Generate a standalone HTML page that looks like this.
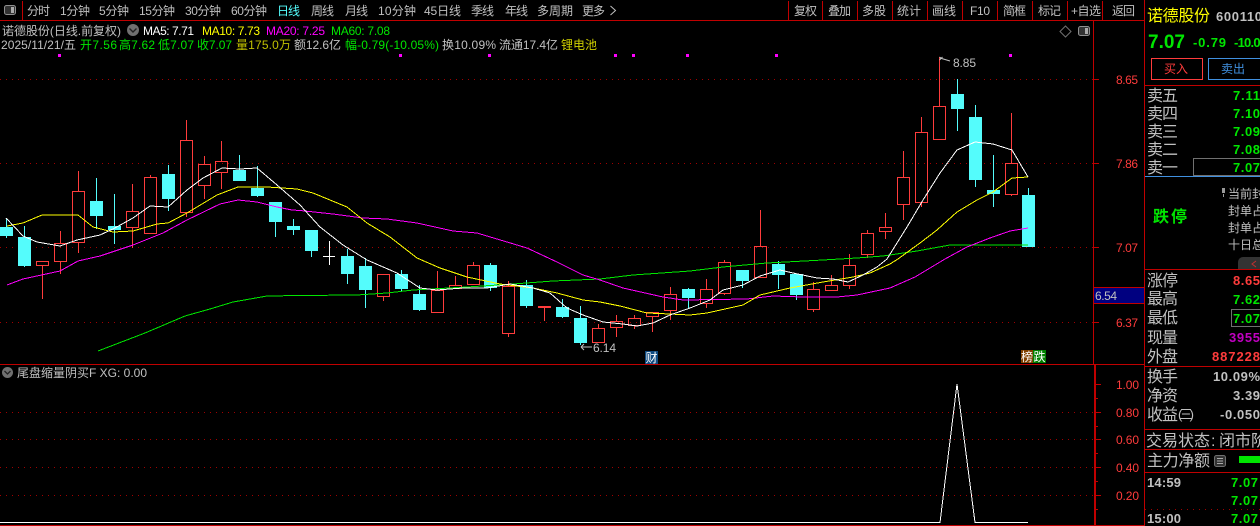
<!DOCTYPE html>
<html><head><meta charset="utf-8"><style>
html,body{margin:0;padding:0;background:#000;width:1260px;height:526px;overflow:hidden}
svg{display:block}
text{font-family:"Liberation Sans","WenQuanYi Zen Hei","Noto Sans CJK SC",sans-serif;font-size:12px;fill:#c0c0c0}
.l{font-size:16px}.g{fill:#00e600}.r{fill:#ff3c3c}.y{fill:#ffff00}.m{fill:#ff00ff}.w{fill:#fff}
.b{font-weight:bold;font-size:13px}
.c{shape-rendering:crispEdges}
</style></head><body>
<svg width="1260" height="526" viewBox="0 0 1260 526" xmlns="http://www.w3.org/2000/svg">
<rect width="1260" height="526" fill="#000"/>
<!-- frame lines -->
<g class="c" fill="#c00000">
<rect x="0" y="20" width="1144" height="1"/>
<rect x="22" y="1" width="1" height="19"/>
<rect x="788" y="1" width="1" height="19"/><rect x="822" y="1" width="1" height="19"/><rect x="857" y="1" width="1" height="19"/><rect x="892" y="1" width="1" height="19"/><rect x="927" y="1" width="1" height="19"/><rect x="962" y="1" width="1" height="19"/><rect x="997" y="1" width="1" height="19"/><rect x="1032" y="1" width="1" height="19"/><rect x="1067" y="1" width="1" height="19"/><rect x="1102" y="1" width="1" height="19"/>
<rect x="1144" y="0" width="1" height="526"/>
<rect x="1093" y="20" width="1" height="344"/>
<rect x="1094" y="365" width="2" height="161"/>
<rect x="0" y="364" width="1144" height="1"/>
<rect x="0" y="525" width="1144" height="1"/>
<rect x="1145" y="85" width="115" height="1"/>
<rect x="1145" y="269" width="115" height="1"/>
<rect x="1145" y="366" width="115" height="1"/>
<rect x="1145" y="429" width="115" height="1"/>
<rect x="1145" y="449" width="115" height="1"/>
<rect x="1145" y="472" width="115" height="1"/>
<rect x="1094" y="79" width="5" height="1"/><rect x="1094" y="163" width="5" height="1"/><rect x="1094" y="247" width="5" height="1"/><rect x="1094" y="322" width="5" height="1"/>
<rect x="1096" y="384" width="5" height="1"/><rect x="1096" y="412" width="5" height="1"/><rect x="1096" y="439" width="5" height="1"/><rect x="1096" y="467" width="5" height="1"/><rect x="1096" y="495" width="5" height="1"/>
<rect x="1096" y="398" width="2" height="1"/><rect x="1096" y="426" width="2" height="1"/><rect x="1096" y="453" width="2" height="1"/><rect x="1096" y="481" width="2" height="1"/><rect x="1096" y="509" width="2" height="1"/>
</g>
<rect class="c" x="1145" y="176" width="115" height="1" fill="#4090e0"/>
<!-- grid -->
<g class="c" stroke="#a00000" stroke-width="1" stroke-dasharray="1 5" fill="none">
<path d="M0 79.5H1093M0 163.5H1093M0 247.5H1093M0 322.5H1093"/>
<path d="M0 412.5H1093M0 439.5H1093M0 467.5H1093M0 495.5H1093"/>
<path d="M1145 509.5H1260"/>
</g>
<!-- markers -->
<g class="c" fill="#ff00ff"><rect x="58" y="54" width="3" height="3"/><rect x="399" y="54" width="3" height="3"/><rect x="488" y="54" width="3" height="3"/><rect x="614" y="54" width="3" height="3"/><rect x="632" y="54" width="3" height="3"/><rect x="686" y="54" width="3" height="3"/><rect x="775" y="54" width="3" height="3"/><rect x="1009" y="54" width="3" height="3"/></g>
<!-- candles -->
<path class="c" fill="none" stroke="#ff3c3c" stroke-width="1" d="M36.5 261.5h12v4h-12zM42.5 265v34M54.5 243.5h12v18h-12zM60.5 231v12M60.5 261v13M72.5 191.5h12v51h-12zM78.5 171v20M78.5 242v11M126.5 211.5h12v16h-12zM132.5 184v27M132.5 227v21M144.5 177.5h12v56h-12zM150.5 175v2M180.5 140.5h12v72h-12zM186.5 120v20M186.5 212v5M198.5 164.5h12v21h-12zM204.5 156v8M204.5 185v14M215.5 161.5h12v11h-12zM221.5 141v20M221.5 172v17M377.5 274.5h12v22h-12zM383.5 296v5M431.5 290.5h12v22h-12zM437.5 271v19M449.5 285.5h12v3h-12zM455.5 276v9M467.5 265.5h12v19h-12zM473.5 262v3M502.5 286.5h12v47h-12zM508.5 281v5M508.5 333v4M544.5 308v13M592.5 328.5h12v14h-12zM598.5 324v4M610.5 321.5h12v6h-12zM616.5 315v6M616.5 327v10M628.5 318.5h12v7h-12zM634.5 315v3M634.5 325v4M646.5 312.5h12v4h-12zM652.5 316v16M664.5 294.5h12v16h-12zM670.5 287v7M670.5 310v10M700.5 289.5h12v14h-12zM706.5 279v10M706.5 303v5M718.5 262.5h12v31h-12zM724.5 260v2M724.5 293v2M754.5 246.5h12v31h-12zM760.5 210v36M807.5 289.5h12v20h-12zM813.5 282v7M813.5 309v3M825.5 285.5h12v5h-12zM831.5 275v10M843.5 265.5h12v20h-12zM849.5 254v11M849.5 285v4M861.5 233.5h12v21h-12zM867.5 230v3M867.5 254v4M879.5 227.5h12v4h-12zM885.5 213v14M885.5 231v8M897.5 177.5h12v27h-12zM903.5 151v26M903.5 204v16M915.5 132.5h12v70h-12zM921.5 117v15M921.5 202v5M933.5 106.5h12v33h-12zM939.5 57v49M1005.5 163.5h12v31h-12zM1011.5 113v50M1011.5 194v2"/>
<rect class="c" x="538" y="306" width="13" height="2" fill="#ff3c3c"/>
<path class="c" fill="none" stroke="#54fcfc" stroke-width="1" d="M6.5 218v20M24.5 226v41M96.5 178v51M114.5 194v50M168.5 165v46M239.5 155v26M257.5 166v31M275.5 222v15M293.5 219v16M311.5 251v6M347.5 249v35M365.5 258v50M401.5 270v21M419.5 285v26M490.5 263v28M526.5 280v28M562.5 299v19M580.5 306v39M688.5 288v20M742.5 281v7M778.5 261v28M796.5 295v5M957.5 79v52M975.5 105v82M993.5 155v52M1028.5 188v7"/>
<path class="c" fill="#54fcfc" d="M0 227h13v9H0zM18 237h13v29H18zM90 201h13v15H90zM108 226h13v4h-13zM162 174h13v25h-13zM233 170h13v11h-13zM251 188h13v8h-13zM269 202h13v20h-13zM287 226h13v4h-13zM305 230h13v21h-13zM341 256h13v18h-13zM359 266h13v24h-13zM395 274h13v15h-13zM413 294h13v16h-13zM484 265h13v23h-13zM520 285h13v21h-13zM556 307h13v10h-13zM574 318h13v25h-13zM682 289h13v9h-13zM736 270h13v11h-13zM772 264h13v11h-13zM790 274h13v21h-13zM951 94h13v15h-13zM969 117h13v63h-13zM987 190h13v4h-13zM1022 195h13v52h-13z"/>
<path class="c" fill="none" stroke="#fff" d="M329.5 241v24M323 256.5h12"/>
<!-- MA lines -->
<g class="c" fill="none" stroke-width="1">
<polyline stroke="#00e600" points="98,351 145,333 185,316 210,309 233,302 267,296 300,295.5 357,295 387,293 413,290 467,287 513,284 553,281 600,279 633,275 690,271 723,267 767,263 823,260 857,258 883,256 917,251 950,245 1028,245"/>
<polyline stroke="#ff00ff" points="7,285 23,279 60,271 78,261 100,256 133,245 163,233 187,220 220,204 238,200 257,202 277,207 292,210 300,210.5 333,214 363,218 387,219 417,223 453,231 477,233 507,242 527,248 557,262 583,275 600,280 623,288 663,297 683,300 747,299 773,296 803,297 837,297 857,295 890,288 915,277 945,259 967,247 990,238 1010,231 1028,228"/>
<polyline stroke="#ffff00" points="7,226 23,223 42,215 78,215 93,227 113,232 133,231 157,224 168,223 187,213 217,195 238,187 267,187 297,189 313,193 347,207 367,223 390,237 417,258 440,268 467,277 500,284 533,288 557,293 583,300 600,302 620,306 647,313 670,314 690,315 707,313 743,305 760,295 790,288 823,282 853,277 870,273 890,264 898,259 920,243 937,230 957,212 977,200 993,192 1012,178 1028,177"/>
<polyline stroke="#fff" points="6,218 23,236 37,242 60,246 77,240 100,235 113,229 133,218 150,206 168,207 187,190 203,178 222,168 240,169 257,168 277,185 300,205 320,227 343,245 367,260 397,273 420,288 437,290 463,288 487,288 510,284 533,288 550,293 567,308 583,315 603,322 623,324 637,326 653,323 670,315 690,308 710,300 723,290 743,285 760,276 780,270 793,273 817,278 833,279 848,282 863,275 877,267 887,259 907,227 923,200 940,173 957,150 975,142 993,144 1012,150 1028,177"/>
<polyline stroke="#fff" points="0,522.5 940,522.5 957,384 975,522.5 1028,522.5"/>
</g>
<!-- toolbar -->
<rect x="4.5" y="5.5" width="11" height="9" rx="2" fill="#333" stroke="#909090"/><rect class="c" x="11" y="7" width="3" height="6" fill="#aaa"/>
<g>
<text x="27" y="15" textLength="23">分时</text><text x="60" y="15" textLength="30">1分钟</text><text x="99" y="15" textLength="30">5分钟</text><text x="139" y="15" textLength="36">15分钟</text><text x="185" y="15" textLength="36">30分钟</text><text x="231" y="15" textLength="36">60分钟</text>
<text x="277" y="15" textLength="23" style="fill:#54fcfc">日线</text>
<text x="311" y="15" textLength="23">周线</text><text x="345" y="15" textLength="23">月线</text><text x="378" y="15" textLength="38">10分钟</text><text x="424" y="15" textLength="37">45日线</text><text x="471" y="15" textLength="23">季线</text><text x="505" y="15" textLength="23">年线</text><text x="537" y="15" textLength="36">多周期</text><text x="582" y="15" textLength="23">更多</text>
<path d="M610.5 6l5 4.5-5 4.5" fill="none" stroke="#c0c0c0"/>
<text x="794" y="15" textLength="23">复权</text><text x="828" y="15" textLength="23">叠加</text><text x="862" y="15" textLength="24">多股</text><text x="897" y="15" textLength="24">统计</text><text x="932" y="15" textLength="24">画线</text><text x="970" y="15" textLength="20">F10</text><text x="1003" y="15" textLength="23">简框</text><text x="1038" y="15" textLength="23">标记</text><text x="1071" y="15" textLength="30">+自选</text><text x="1112" y="15" textLength="23">返回</text>
</g>
<!-- info lines -->
<text x="2" y="35" textLength="119">诺德股份(日线.前复权)</text>
<circle cx="133" cy="30" r="6" fill="#707070"/><path d="M129.5 28.5l3.5 3.5 3.5-3.5" fill="none" stroke="#222" stroke-width="1.4"/>
<text x="143" y="35" textLength="51" class="w">MA5: 7.71</text><text x="202" y="35" textLength="58" class="y">MA10: 7.73</text><text x="266" y="35" textLength="59" class="m">MA20: 7.25</text><text x="331" y="35" textLength="59" class="g">MA60: 7.08</text>
<text x="1" y="49" textLength="75">2025/11/21/五</text><text x="80" y="49" textLength="37" class="g">开7.56</text><text x="119" y="49" textLength="36" class="g">高7.62</text><text x="158" y="49" textLength="36" class="g">低7.07</text><text x="197" y="49" textLength="35" class="g">收7.07</text><text x="236" y="49" textLength="55" style="fill:#c0c000">量175.0万</text><text x="294" y="49" textLength="47">额12.6亿</text><text x="345" y="49" textLength="94" class="g">幅-0.79(-10.05%)</text><text x="442" y="49" textLength="54">换10.09%</text><text x="499" y="49" textLength="59">流通17.4亿</text><text x="561" y="49" textLength="36" style="fill:#d0d000">锂电池</text>
<!-- chart icons -->
<path d="M1065.5 26l5.5 5.5-5.5 5.5-5.5-5.5z" fill="none" stroke="#707070"/>
<rect x="1078.5" y="26.5" width="11" height="9" rx="2" fill="#333" stroke="#909090"/><rect class="c" x="1085" y="28" width="3" height="6" fill="#aaa"/>
<!-- labels -->
<path d="M939.5 60l3-3M939.5 57l3 2M940 58l10 3" fill="none" stroke="#c0c0c0"/>
<text x="953" y="67" textLength="23">8.85</text>
<path d="M581 347h11M581 347l3-3M581 347l3 3" fill="none" stroke="#c0c0c0"/>
<text x="593" y="352" textLength="23">6.14</text>
<rect class="c" x="645" y="351" width="13" height="13" fill="#0f4a80"/><text x="645.5" y="362" textLength="12" class="w">财</text>
<rect class="c" x="1021" y="350" width="12" height="13" fill="#804000"/><text x="1021" y="361" textLength="12" class="w">榜</text>
<rect class="c" x="1033" y="350" width="13" height="13" fill="#008000"/><text x="1033.5" y="361" textLength="12" class="w">跌</text>
<!-- axis -->
<text x="1116" y="84" textLength="22" class="r">8.65</text><text x="1116" y="168" textLength="22" class="r">7.86</text><text x="1116" y="252" textLength="22" class="r">7.07</text><text x="1116" y="327" textLength="22" class="r">6.37</text>
<rect class="c" x="1094" y="287" width="50" height="16" fill="#000080"/><rect class="c" x="1094" y="287" width="50" height="1" fill="#c00000"/><rect class="c" x="1094" y="303" width="50" height="1" fill="#c00000"/>
<text x="1095" y="300" textLength="22">6.54</text>
<text x="1116" y="389" textLength="23" class="r">1.00</text><text x="1116" y="417" textLength="23" class="r">0.80</text><text x="1116" y="444" textLength="23" class="r">0.60</text><text x="1116" y="472" textLength="23" class="r">0.40</text><text x="1116" y="500" textLength="23" class="r">0.20</text>
<!-- indicator header -->
<circle cx="7.5" cy="372.5" r="5.5" fill="#707070"/><path d="M4.5 371l3 3 3-3" fill="none" stroke="#222" stroke-width="1.3"/>
<text x="17" y="377" textLength="130">尾盘缩量阴买F  XG: 0.00</text>
<!-- right panel -->
<text x="1147" y="21" textLength="63" class="l y">诺德股份</text>
<text x="1216" y="21" textLength="46" style="font-size:13px;font-weight:bold">600110</text>
<text x="1148" y="48" textLength="37" style="font-size:19px;font-weight:bold;fill:#00e600">7.07</text>
<text x="1193" y="47" textLength="33" class="b g">-0.79</text><text x="1234" y="47" textLength="33" class="b g">-10.05</text>
<rect class="c" x="1151.5" y="58.5" width="51" height="21" fill="none" stroke="#ff3c3c"/><text x="1164" y="73" textLength="24" class="r">买入</text>
<rect class="c" x="1208.5" y="58.5" width="52" height="21" fill="none" stroke="#4090e0"/><text x="1221" y="73" textLength="24" style="fill:#4090e0">卖出</text>
<text x="1147" y="101" textLength="31" class="l">卖五</text><text x="1147" y="119" textLength="31" class="l">卖四</text><text x="1147" y="137" textLength="31" class="l">卖三</text><text x="1147" y="155" textLength="31" class="l">卖二</text><text x="1147" y="173" textLength="31" class="l">卖一</text>
<text x="1233" y="100" textLength="27" class="b g">7.11</text><text x="1233" y="118" textLength="27" class="b g">7.10</text><text x="1233" y="136" textLength="27" class="b g">7.09</text><text x="1233" y="154" textLength="27" class="b g">7.08</text><text x="1233" y="172" textLength="27" class="b g">7.07</text>
<rect class="c" x="1193.5" y="158.5" width="68" height="17" fill="none" stroke="#707070"/>
<text x="1153" y="222" textLength="34" style="font-size:16px;font-weight:bold;fill:#00e600">跌停</text>
<rect class="c" x="1222" y="188" width="3" height="5" fill="#999"/><rect class="c" x="1223" y="194" width="1" height="3" fill="#999"/>
<text x="1228" y="198" textLength="36">当前封</text><text x="1228" y="215" textLength="36">封单占</text><text x="1228" y="232" textLength="36">封单占</text><text x="1228" y="249" textLength="36">十日总</text>
<path d="M1238 269v-7a5 5 0 0 1 5-5h17v12z" fill="#333"/><path d="M1256 261l-4 3 4 3" fill="none" stroke="#c03030"/>
<text x="1147" y="286" textLength="31" class="l">涨停</text><text x="1147" y="304" textLength="31" class="l">最高</text><text x="1147" y="323" textLength="31" class="l">最低</text><text x="1147" y="343" textLength="31" class="l">现量</text><text x="1147" y="362" textLength="31" class="l">外盘</text>
<text x="1233" y="285" textLength="27" class="b r">8.65</text><text x="1233" y="304" textLength="27" class="b g">7.62</text>
<rect class="c" x="1231.5" y="309.5" width="30" height="17" fill="none" stroke="#707070"/><text x="1233" y="323" textLength="27" class="b g">7.07</text>
<text x="1229" y="342" textLength="31" class="b" style="fill:#c000c0">3955</text><text x="1212" y="361" textLength="48" class="b r">887228</text>
<text x="1147" y="382" textLength="31" class="l">换手</text><text x="1147" y="401" textLength="31" class="l">净资</text><text x="1147" y="420" textLength="31" class="l">收益</text><text x="1178" y="419" textLength="16" style="font-size:13px">(三)</text>
<text x="1213" y="381" textLength="47" class="b">10.09%</text><text x="1233" y="400" textLength="27" class="b">3.39</text><text x="1220" y="419" textLength="40" class="b">-0.050</text>
<text x="1146" y="446" textLength="64" class="l">交易状态</text><text x="1211" y="446" class="l">:</text><text x="1219" y="446" textLength="48" class="l">闭市阶</text>
<text x="1147" y="466" textLength="63" class="l">主力净额</text>
<rect x="1214.5" y="455.5" width="11" height="11" rx="2" fill="#333" stroke="#707070"/><path class="c" d="M1217 458.5h6M1217 461h6M1217 463.5h6" stroke="#aaa" fill="none"/>
<rect class="c" x="1239" y="456" width="21" height="7" fill="#00e600"/>
<text x="1147" y="487" textLength="34" class="b">14:59</text><text x="1231" y="487" textLength="27" class="b g">7.07</text>
<text x="1231" y="505" textLength="27" class="b g">7.07</text>
<text x="1147" y="523" textLength="34" class="b">15:00</text><text x="1231" y="523" textLength="27" class="b g">7.07</text>
</svg>
</body></html>
